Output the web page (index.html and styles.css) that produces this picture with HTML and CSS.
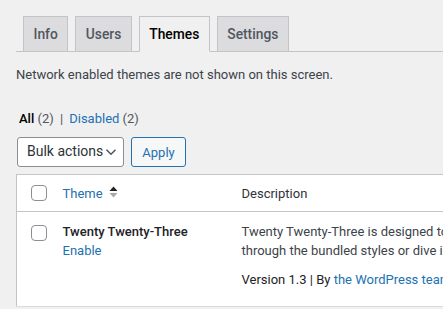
FILE: index.html
```html
<!DOCTYPE html>
<html lang="en">
<head>
  <meta charset="UTF-8" />
  <title>Edit Site: Themes</title>
  <link rel="stylesheet" href="styles.css">
</head>
<body>
  <div class="wrap">

    <nav class="nav-tab-wrapper">
      <a class="nav-tab" href="#">Info</a>
      <a class="nav-tab" href="#">Users</a>
      <a class="nav-tab nav-tab-active" href="#">Themes</a>
      <a class="nav-tab" href="#">Settings</a>
    </nav>

    <p class="note">Network enabled themes are not shown on this screen.</p>

    <ul class="subsubsub">
      <li><a class="current" href="#">All <span class="count">(2)</span></a> <span class="sep">|</span></li>
      <li><a href="#">Disabled <span class="count">(2)</span></a></li>
    </ul>

    <div class="tablenav">
      <div class="select-box">
        <span>Bulk actions</span>
        <svg width="12" height="8" viewBox="0 0 12 8"><path d="M1.5 1.8 6 6.2l4.5-4.4" fill="none" stroke="#50575e" stroke-width="1.6"/></svg>
      </div>
      <button class="button">Apply</button>
    </div>

    <table class="themes">
      <thead>
        <tr>
          <td class="check-column"><span class="checkbox"></span></td>
          <th class="col-name"><a href="#">Theme</a>
            <span class="sorting">
              <svg width="9" height="12" viewBox="0 0 9 12"><path d="M4.5 0.5 8.5 5H0.5z" fill="#1d2327"/><path d="M0.5 7H8.5L4.5 11.5z" fill="#a7aaad"/></svg>
            </span>
          </th>
          <th class="col-desc">Description</th>
        </tr>
      </thead>
      <tbody>
        <tr>
          <td class="check-column"><span class="checkbox"></span></td>
          <td class="col-name">
            <strong>Twenty Twenty-Three</strong>
            <div class="row-actions"><a href="#">Enable</a></div>
          </td>
          <td class="col-desc">
            <p>Twenty Twenty-Three is designed to take advantage of the new design tools introduced in WordPress 6.1. With a clean, blank base as a starting point, this default theme includes ten diverse style variations created by members of the WordPress community. Whether you want to build a complex or incredibly simple website, you can do it quickly and intuitively<br>through the bundled styles or dive into creation and full customization yourself.</p>
            <p class="meta">Version 1.3 | By <a href="#">the WordPress team</a> | <a href="#">Visit Theme Site</a></p>
          </td>
        </tr>
      </tbody>
    </table>

  </div>
</body>
</html>
```

FILE: styles.css
```css
body {
  margin: 0;
  background: #f0f0f1;
  color: #3c434a;
  font-family: Roboto, sans-serif;
  font-size: 13px;
  line-height: 1.4;
  overflow: hidden;
}

a {
  color: #2271b1;
  text-decoration: none;
}

.wrap {
  width: 2600px;
  padding: 16px 0 0 16px;
}

.nav-tab-wrapper {
  display: flex;
  border-bottom: 1px solid #c3c4c7;
}

.nav-tab {
  margin-left: 7px;
  margin-bottom: -1px;
  padding: 5px 9.5px;
  border: 1px solid #c3c4c7;
  background: #dcdcde;
  color: #50575e;
  font-size: 13.8px;
  font-weight: 500;
  line-height: 24px;
}

.nav-tab-active {
  background: #f0f0f1;
  border-bottom-color: #f0f0f1;
  color: #000;
}

p.note {
  margin: 13px 0 0;
  line-height: 20px;
}

.subsubsub {
  list-style: none;
  margin: 21px 0 0;
  padding: 0 0 0 3px;
  display: flex;
  gap: 3px;
  line-height: 26px;
  color: #50575e;
}

.subsubsub .current {
  color: #000;
  font-weight: 500;
}

.subsubsub .count {
  color: #50575e;
  font-weight: 400;
}

.subsubsub .sep {
  margin: 0 3px;
  color: #50575e;
}

.tablenav {
  display: flex;
  gap: 7px;
  margin: 5px 0 7px 1px;
  height: 30px;
}

.select-box {
  display: flex;
  align-items: center;
  justify-content: space-between;
  width: 107px;
  box-sizing: border-box;
  padding: 0 6px 0 9px;
  border: 1px solid #8c8f94;
  border-radius: 3px;
  background: #fff;
  color: #2c3338;
  font-size: 14px;
  white-space: nowrap;
}

.button {
  width: 55px;
  padding: 0;
  border: 1px solid #2271b1;
  border-radius: 3px;
  background: #f6f7f7;
  color: #2271b1;
  font-family: inherit;
  font-size: 13px;
}

table.themes {
  width: 100%;
  border-collapse: collapse;
  border: 1px solid #c3c4c7;
  background: #fff;
}

.themes th,
.themes td {
  text-align: left;
  vertical-align: top;
  font-weight: 400;
}

.themes thead th,
.themes thead td {
  border-bottom: 1px solid #c3c4c7;
  padding: 9px 10px 8px;
  line-height: 19px;
  font-size: 13px;
  color: #2c3338;
}

.themes .check-column {
  width: 36px;
  padding: 10px 0 0 14px;
  box-sizing: border-box;
}

.checkbox {
  display: block;
  width: 14px;
  height: 14px;
  border: 1px solid #8c8f94;
  border-radius: 4px;
  background: #fff;
}

.themes .col-name {
  width: 179px;
  box-sizing: border-box;
}

.sorting {
  display: inline-block;
  margin-left: 3px;
  vertical-align: 0;
}

.themes tbody td {
  padding: 10px 10px 17px;
  line-height: 19px;
  border-bottom: 1px solid #dcdcde;
}

.themes tbody .check-column {
  padding-top: 13px;
}

.themes tbody strong {
  color: #1d2327;
  font-weight: 500;
}

.col-desc p {
  margin: 0;
  white-space: nowrap;
}

.col-desc p.meta {
  margin-top: 10px;
  color: #1d2327;
}
```
